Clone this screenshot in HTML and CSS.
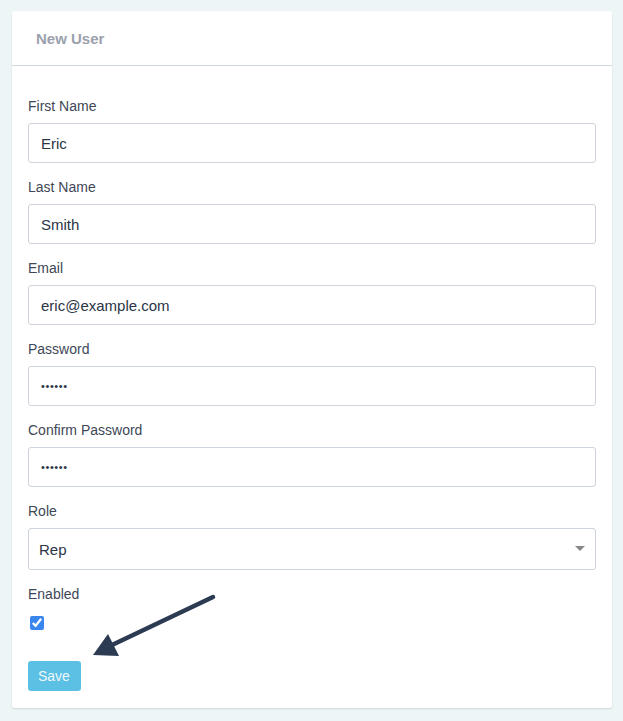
FILE: index.html
```html
<!DOCTYPE html>
<html lang="en">
<head>
<meta charset="utf-8">
<title>New User</title>
<link rel="stylesheet" href="styles.css">
</head>
<body>
<div class="card">
  <div class="card-header">New User</div>
  <form class="card-body">
    <div class="field">
      <label class="label" for="fn">First Name</label>
      <input class="input" id="fn" type="text" value="Eric">
    </div>
    <div class="field">
      <label class="label" for="ln">Last Name</label>
      <input class="input" id="ln" type="text" value="Smith">
    </div>
    <div class="field">
      <label class="label" for="em">Email</label>
      <input class="input" id="em" type="text" value="eric@example.com">
    </div>
    <div class="field">
      <label class="label" for="pw">Password</label>
      <input class="input dots" id="pw" type="text" value="••••••">
    </div>
    <div class="field">
      <label class="label" for="cpw">Confirm Password</label>
      <input class="input dots" id="cpw" type="text" value="••••••">
    </div>
    <div class="field">
      <label class="label" for="role">Role</label>
      <div class="select-wrap">
        <select class="select" id="role">
          <option>Rep</option>
          <option>Admin</option>
        </select>
      </div>
    </div>
    <div class="field field-check">
      <label class="label" for="en">Enabled</label>
      <input class="check" id="en" type="checkbox" checked>
    </div>
    <button class="btn" type="button">Save</button>
  </form>
  <svg class="arrow" width="623" height="721" viewBox="0 0 623 721" aria-hidden="true">
    <line x1="213" y1="597" x2="112" y2="645" stroke="#2c3a52" stroke-width="4.5" stroke-linecap="round"/>
    <polygon points="93,655 108,634 119,656" fill="#2c3a52"/>
  </svg>
</div>
</body>
</html>
```
FILE: styles.css
```css
html, body {
  margin: 0;
  padding: 0;
  background: #eef5f7;
}
body {
  padding: 11px 11px 14px 12px;
  font-family: "Liberation Sans", Arial, sans-serif;
}
.card {
  position: relative;
  background: #ffffff;
  border-radius: 3px;
  box-shadow: 0 1px 2px rgba(0, 0, 0, 0.12);
}
.card-header {
  height: 55px;
  box-sizing: border-box;
  padding: 0 24px;
  display: flex;
  align-items: center;
  border-bottom: 1px solid #cfd6dd;
  font-weight: bold;
  font-size: 15px;
  color: #9aa1ac;
}
.card-body {
  margin: 0;
  padding: 30px 16px 17px 16px;
}
.field {
  margin-bottom: 14px;
}
.label {
  display: block;
  font-size: 14px;
  line-height: 20px;
  color: #3e4757;
  margin-bottom: 7px;
}
.input {
  display: block;
  width: 100%;
  box-sizing: border-box;
  height: 40px;
  padding: 0 12px;
  border: 1px solid #cdd4dc;
  border-radius: 3px;
  font-family: "Liberation Sans", Arial, sans-serif;
  font-size: 15px;
  color: #2b3547;
  background: #fff;
  outline: none;
}
.dots {
  font-size: 11px;
  letter-spacing: 0.6px;
}
.select-wrap {
  position: relative;
}
.select-wrap::after {
  content: "";
  position: absolute;
  right: 11px;
  top: 18px;
  width: 0;
  height: 0;
  border-left: 5px solid transparent;
  border-right: 5px solid transparent;
  border-top: 5px solid #888;
  pointer-events: none;
}
.select {
  display: block;
  width: 100%;
  box-sizing: border-box;
  height: 42px;
  padding: 0 10px;
  border: 1px solid #cdd4dc;
  border-radius: 3px;
  background: #fff;
  font-family: "Liberation Sans", Arial, sans-serif;
  font-size: 15px;
  color: #2b3547;
  -webkit-appearance: none;
  appearance: none;
  outline: none;
}
.field-check {
  margin-bottom: 0;
}
.check {
  display: block;
  width: 14px;
  height: 14px;
  margin: 12px 0 0 2px;
  accent-color: #3a86ee;
}
.btn {
  display: block;
  margin-top: 31px;
  height: 30px;
  padding: 0 11px 0 10px;
  border: none;
  border-radius: 3px;
  background: #5cc0e4;
  color: rgba(255, 255, 255, 0.92);
  font-family: "Liberation Sans", Arial, sans-serif;
  font-size: 14px;
}
.arrow {
  position: absolute;
  left: -12px;
  top: -11px;
  pointer-events: none;
}
```
